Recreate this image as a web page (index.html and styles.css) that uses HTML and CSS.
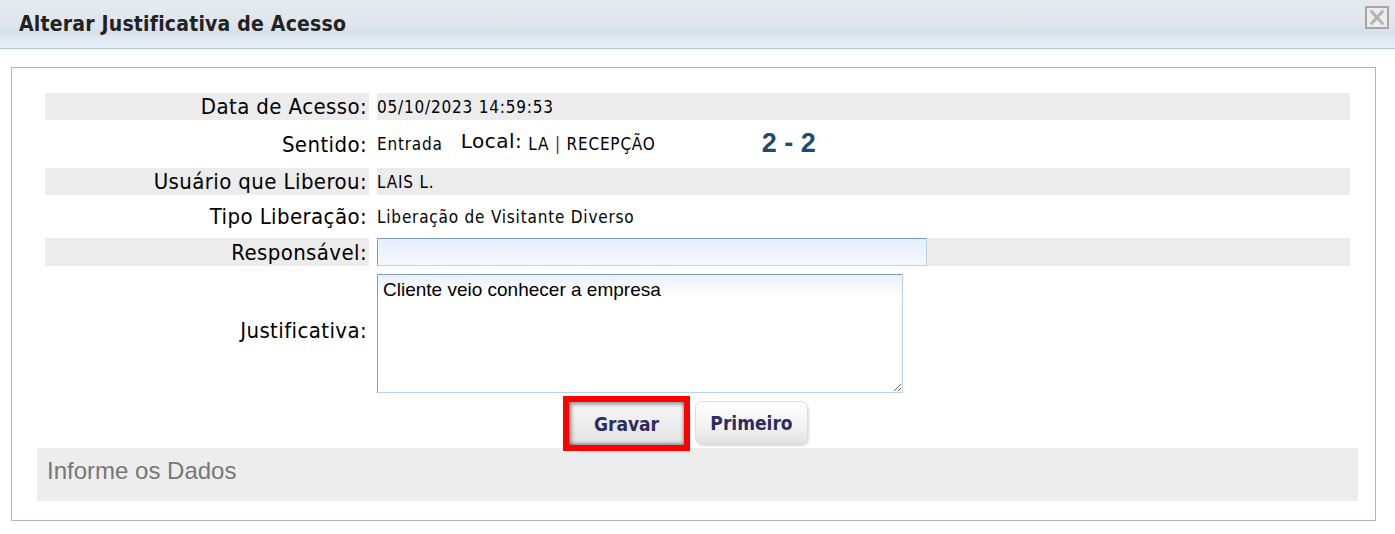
FILE: index.html
```html
<!DOCTYPE html>
<html lang="pt-BR">
<head>
    <meta charset="UTF-8">
    <meta name="viewport" content="width=device-width, initial-scale=1.0">
    <title>Alterar Justificativa de Acesso</title>
    <link rel="stylesheet" href="styles.css">
</head>
<body>

<header class="dialog-header">
    <h2>Alterar Justificativa de Acesso</h2>
    <button class="close-btn" title="Fechar">
        <svg width="24" height="23" viewBox="0 0 24 23">
            <rect x="1" y="1" width="22" height="21" fill="#ececec" stroke="#a6a6a6" stroke-width="2"/>
            <path d="M6.5 5.5 L17.5 17.5 M17.5 5.5 L6.5 17.5" stroke="#b4b4b4" stroke-width="3" stroke-linecap="round"/>
        </svg>
    </button>
</header>

<div class="panel">
    <div class="form">
        <div class="row shaded h27">
            <div class="label">Data de Acesso:</div>
            <div class="value">05/10/2023 14:59:53</div>
        </div>
        <div class="row h48">
            <div class="label">Sentido:</div>
            <div class="value">
                <span>Entrada</span>
                <span class="local-label">Local:</span>
                <span>LA <span class="sep">|</span> RECEPÇÃO</span>
                <span class="counter">2 - 2</span>
            </div>
        </div>
        <div class="row shaded h27">
            <div class="label">Usuário que Liberou:</div>
            <div class="value">LAIS L.</div>
        </div>
        <div class="row h43">
            <div class="label">Tipo Liberação:</div>
            <div class="value">Liberação de Visitante Diverso</div>
        </div>
        <div class="row shaded h28">
            <div class="label">Responsável:</div>
            <div class="value"><input type="text" class="field-input"></div>
        </div>
        <div class="row h129">
            <div class="label">Justificativa:</div>
            <div class="value top"><textarea class="field-text">Cliente veio conhecer a empresa</textarea></div>
        </div>
    </div>

    <div class="actions">
        <button class="btn btn-save">Gravar</button>
        <button class="btn btn-first">Primeiro</button>
    </div>

    <div class="message">Informe os Dados</div>
</div>

</body>
</html>
```

FILE: styles.css
```css
body {
    margin: 0;
    padding: 0;
    background-color: #fff;
    font-family: "DejaVu Sans Condensed", "DejaVu Sans", sans-serif;
    color: #000;
}
.dialog-header {
    height: 48px;
    border-bottom: 1px solid #b3c6dc;
    background: linear-gradient(to bottom, #e6e9ef 0%, #e0e6ed 50%, #d7e0e9 68%, #e2ebf5 84%, #e6eef8 100%);
    display: flex;
    align-items: flex-start;
    justify-content: space-between;
}
.dialog-header h2 {
    margin: 0;
    padding: 12px 0 0 19px;
    font-size: 21px;
    font-weight: bold;
    color: #222;
    letter-spacing: 0.2px;
}
.close-btn {
    margin: 6px 6px 0 0;
    padding: 0;
    border: none;
    background: none;
    width: 24px;
    height: 23px;
    cursor: pointer;
}
.close-btn svg {
    display: block;
}
.panel {
    margin: 18px 19px 0 11px;
    height: 454px;
    border: 1px solid #a9b7c9;
    box-sizing: border-box;
    padding: 25px 25px 0 33px;
}
.form {
    display: flex;
    flex-direction: column;
    width: 1305px;
}
.row {
    display: grid;
    grid-template-columns: 324px 973px;
    column-gap: 8px;
}
.h27 { height: 27px; }
.h28 { height: 28px; }
.h43 { height: 43px; }
.h48 { height: 48px; }
.h129 { height: 129px; }
.row.shaded .label,
.row.shaded .value {
    background-color: #ececec;
}
.label {
    display: flex;
    align-items: center;
    justify-content: flex-end;
    font-size: 22px;
    letter-spacing: 0.4px;
    padding-right: 2px;
}
.value {
    display: flex;
    align-items: center;
    font-size: 17px;
    letter-spacing: 0.8px;
}
.value.top {
    align-items: flex-start;
    padding-top: 8px;
}
.local-label {
    font-family: "DejaVu Sans", sans-serif;
    font-size: 20px;
    letter-spacing: 0.5px;
    margin: 0 6px 6px 18px;
}
.sep {
    color: #6b1a5a;
}
.counter {
    font-family: "Liberation Sans", Arial, sans-serif;
    font-weight: bold;
    font-size: 27px;
    letter-spacing: 0;
    color: #1d4c6c;
    margin-left: 106px;
    margin-bottom: 2px;
}
.field-input {
    width: 550px;
    height: 28px;
    box-sizing: border-box;
    border: 1px solid #b9d1ea;
    border-top-color: #7f9db9;
    border-left-color: #7f9db9;
    background: linear-gradient(to bottom, #e4eefb 0%, #f6f9fe 100%);
    margin: 0;
    padding: 2px 4px;
}
.field-text {
    width: 526px;
    height: 119px;
    box-sizing: border-box;
    margin: 0;
    padding: 4px 5px;
    border: 1px solid #b9d1ea;
    border-top-color: #7f9db9;
    border-left-color: #7f9db9;
    background: linear-gradient(to bottom, #e9f1fc 0px, #ffffff 22px);
    font-family: "Liberation Sans", Arial, sans-serif;
    font-size: 19px;
    letter-spacing: 0;
    color: #000;
}
.actions {
    display: flex;
    justify-content: center;
    align-items: flex-start;
    gap: 11px;
    height: 53px;
    padding: 6px 10px 0 0;
    margin-left: -33px;
    margin-right: -25px;
    box-sizing: border-box;
}
.btn {
    height: 43px;
    border: none;
    font-family: "DejaVu Sans Condensed", "DejaVu Sans", sans-serif;
    font-size: 19px;
    font-weight: bold;
    color: #2c2c5e;
    cursor: pointer;
    padding: 0;
}
.btn-save {
    width: 115px;
    margin-top: 1px;
    background: linear-gradient(to bottom, #f7f7f7 0%, #e2e2e2 100%);
    outline: 6px solid #ff0000;
    box-shadow: inset 2px 2px 4px rgba(0, 0, 0, 0.45), inset -1px -2px 3px rgba(0, 0, 0, 0.3), 8px 8px 4px -3px rgba(0, 0, 0, 0.25);
}
.btn-first {
    width: 113px;
    border: 1px solid #dcdcdc;
    border-radius: 7px;
    background: linear-gradient(to bottom, #ffffff 0%, #f2f2f2 60%, #e2e2e2 100%);
    box-shadow: 1px 2px 2px rgba(0, 0, 0, 0.15);
}
.message {
    margin: 0 -8px 0 -8px;
    height: 53px;
    background-color: #ededed;
    display: flex;
    align-items: center;
    padding: 0 10px 8px;
    box-sizing: border-box;
    font-family: "Liberation Sans", Arial, sans-serif;
    font-size: 24px;
    color: #777;
}
```
